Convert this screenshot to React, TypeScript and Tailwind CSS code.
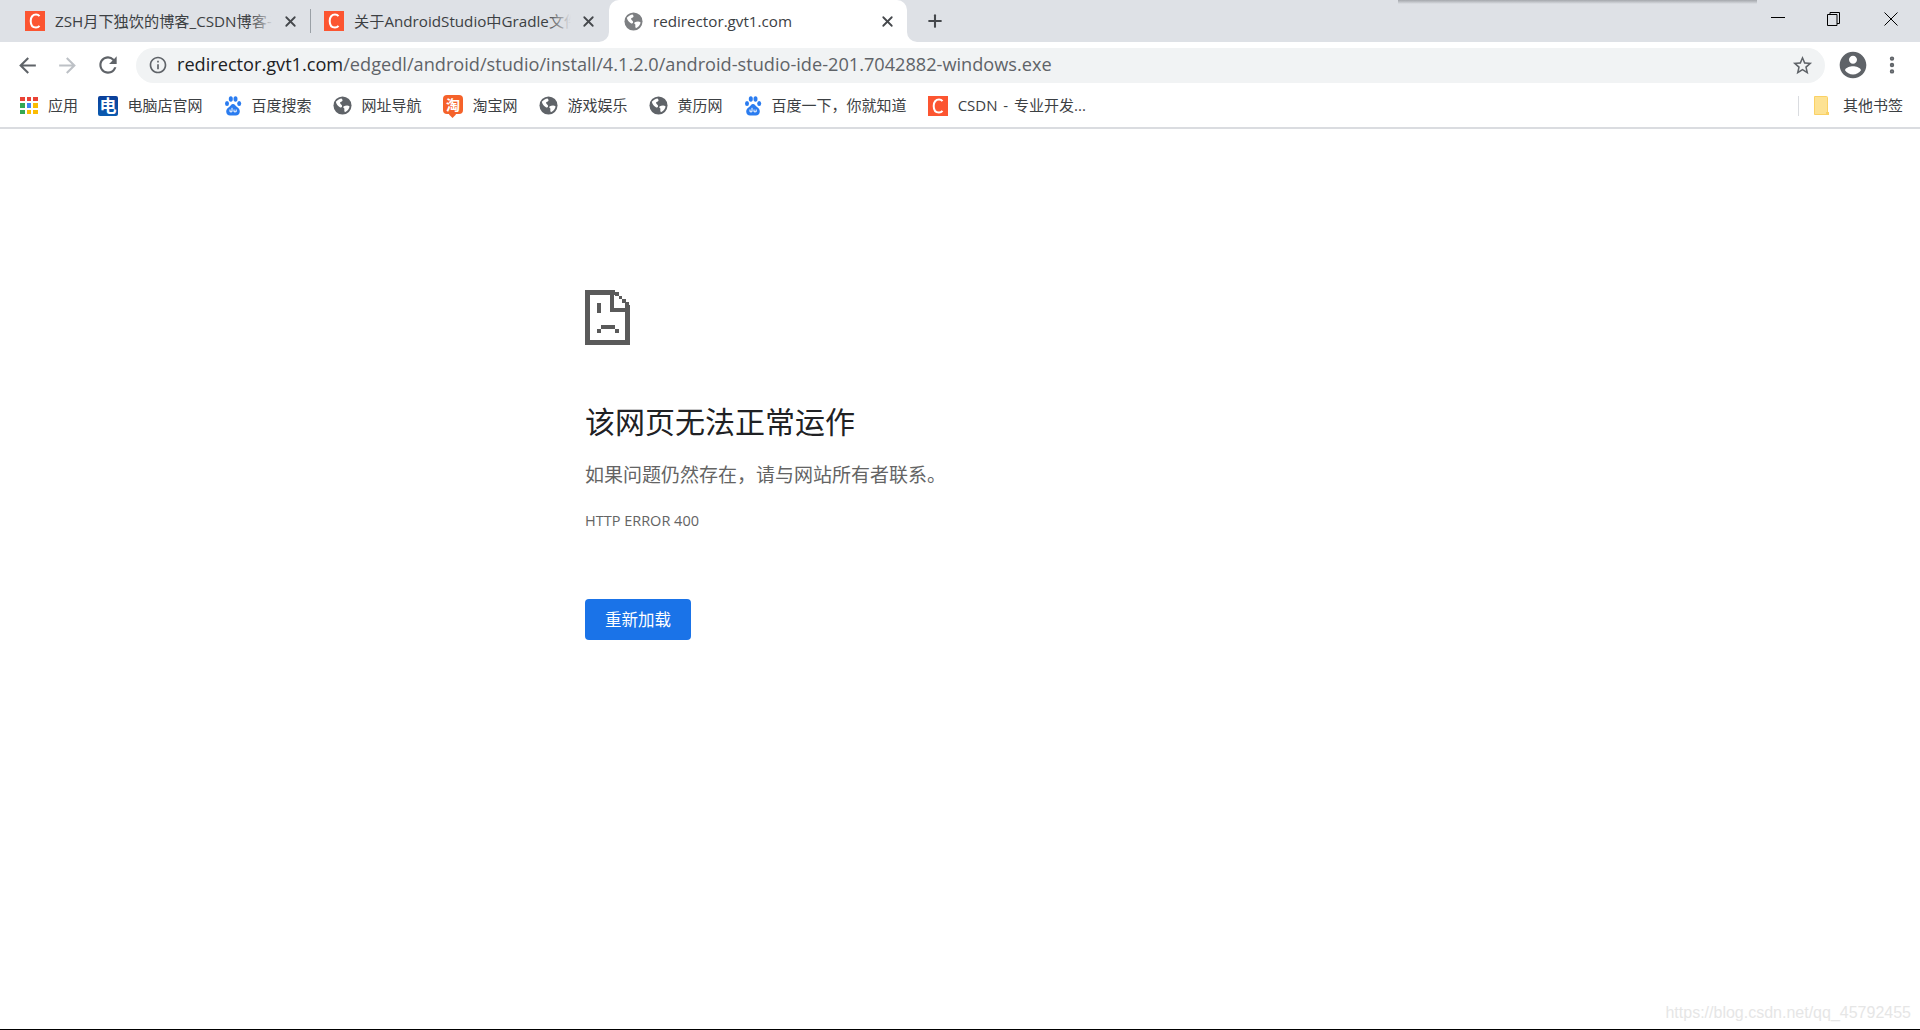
import React from 'react';
import { X, Plus, EllipsisVertical } from 'lucide-react';

const cjk = "font-['Open_Sans','Noto_Sans_CJK_SC',sans-serif]";

const MaterialIcon = ({ d, size, className }: { d: string; size: number; className?: string }) => (
  <svg width={size} height={size} viewBox="0 0 24 24" fill="currentColor" className={`shrink-0 ${className ?? ''}`}>
    <path d={d} />
  </svg>
);

const CsdnIcon = () => (
  <span className="w-5 h-5 bg-[#fc5531] flex items-center justify-center shrink-0">
    <svg width="12" height="16" viewBox="0 0 12 16" fill="none">
      <path d="M10.5 3.2C9.6 2 8.4 1.5 7 1.5 3.8 1.5 1.7 4 1.7 8s2.1 6.5 5.3 6.5c1.4 0 2.6-.5 3.5-1.7" stroke="#fff" strokeWidth="2" />
    </svg>
  </span>
);

const Globe = ({ color = '#5f6368' }: { color?: string }) => (
  <svg width="19" height="19" viewBox="0 0 20 20" className="shrink-0">
    <circle cx="10" cy="10" r="9.5" fill={color} />
    <path d="M3 6c2-2 4-3.500 6-3.500 1 1 1.500 2 .5 3S7 6 7.500 7.500 10 9 9.500 11 7 12 5.500 10.500 3.500 8 3 6zM11 11c2-1 5-1.500 6.500 0-.5 2.500-2.500 5-5 6-1-1.500-.5-2.500-.5-3.500S10 12 11 11z" fill="#fff" />
  </svg>
);

const Baidu = () => (
  <svg width="18" height="20" viewBox="0 0 18 20" className="shrink-0">
    <g fill="#2a7cf0">
      <ellipse cx="3" cy="7.500" rx="2" ry="2.500" />
      <ellipse cx="6.800" cy="3" rx="2" ry="2.800" />
      <ellipse cx="11.500" cy="3" rx="2" ry="2.800" />
      <ellipse cx="15.200" cy="7.500" rx="2" ry="2.500" />
      <path d="M9 8c2 0 2.500 2 4 3s2.800 2 2.800 4.500-2 4-4 4H6c-2 0-3.800-1.500-3.800-4s1.500-3.500 3-4.500S7 8 9 8z" />
    </g>
    <path d="M6 13.500v2.300h2v-4M10 13.500v2.300h2.200v-2.300" fill="none" stroke="#fff" strokeWidth="1" />
  </svg>
);

const Taobao = () => (
  <span className="w-5 h-[19px] rounded-[4px] bg-[#f5622a] text-white relative flex items-center justify-center text-[14px] font-bold leading-none shrink-0 -mt-[2px]">
    淘
    <span className="absolute left-[7px] -bottom-[3px] w-[5px] h-[5px] bg-[#f5622a] rotate-45" />
  </span>
);

const Apps = () => (
  <span className="grid grid-cols-3 gap-[2px] w-[18px] shrink-0">
    {['#ea4335', '#ea4335', '#ea4335', '#34a853', '#4285f4', '#fbbc04', '#34a853', '#fbbc04', '#fbbc04'].map((c, i) => (
      <span key={i} className="w-[4.600px] h-[4.600px]" style={{ background: c }} />
    ))}
  </span>
);

const Dian = () => (
  <span className="w-5 h-5 rounded-[2px] bg-gradient-to-b from-[#0b3f9a] to-[#0b5bb0] text-white flex items-center justify-center text-[17px] font-bold leading-none shrink-0">电</span>
);

const Folder = () => (
  <svg width="15" height="19" viewBox="0 0 15 19" className="shrink-0">
    <path d="M.5.5h12a1 1 0 0 1 1 1v17H.5z" fill="#fde293" stroke="#fad165" />
    <path d="M12 19v-3h3v3z" fill="#fad165" />
  </svg>
);

// pixel-art sad page
const SadPage = () => (
  <svg width="45" height="55" viewBox="0 0 45 55" shapeRendering="crispEdges" fill="#5a5a5a" className="block">
    <path d="M0 0h30v5H5v45h35V15h5v40H0z" />
    <path d="M25 5h4v13h11v4H25z" />
    <path d="M30 2h3.500v3.500H30zM33.500 5.500H37V9h-3.500zM37 9h3.500v3.500H37zM40 12h3.500v3.500H40z" />
    <path d="M12 13h4v10h-4zM16 35h14v3.500H16zM12 38.500h4V43h-4zM30 38.500h4V43h-4z" />
  </svg>
);

const bookmarks: { icon: React.ReactNode; label: string }[] = [
  { icon: <Dian />, label: '电脑店官网' },
  { icon: <Baidu />, label: '百度搜索' },
  { icon: <Globe />, label: '网址导航' },
  { icon: <Taobao />, label: '淘宝网' },
  { icon: <Globe />, label: '游戏娱乐' },
  { icon: <Globe />, label: '黄历网' },
  { icon: <Baidu />, label: '百度一下，你就知道' },
  { icon: <CsdnIcon />, label: 'CSDN - 专业开发...' },
];

export default function App() {
  return (
    <div className={`w-[1920px] h-[1030px] bg-white flex flex-col overflow-hidden ${cjk}`}>
      {/* Tab strip */}
      <div className="h-[42px] bg-[#dee1e6] flex items-stretch shrink-0 relative">
        <div className="absolute top-0 left-[1398px] w-[359px] h-[4px] bg-gradient-to-b from-[#a4a7ac] to-[#dee1e6]" />
        <div className="w-[310px] flex items-center pl-[25px] shrink-0">
          <CsdnIcon />
          <span className="ml-[10px] w-[219px] overflow-hidden whitespace-nowrap text-[15.200px] text-[#3c4043] relative">
            ZSH月下独饮的博客_CSDN博客-
            <span className="absolute right-0 top-0 bottom-0 w-6 bg-gradient-to-r from-transparent to-[#dee1e6]" />
          </span>
          <X size={17} strokeWidth={2.500} className="ml-[7.500px] text-[#45484c] shrink-0" />
        </div>
        <div className="w-[1px] h-[24px] bg-[#9aa0a6] self-center shrink-0" />
        <div className="w-[298px] flex items-center pl-[13px] shrink-0">
          <CsdnIcon />
          <span className="ml-[10px] w-[217px] overflow-hidden whitespace-nowrap text-[15.200px] text-[#3c4043] relative">
            关于AndroidStudio中Gradle文件
            <span className="absolute right-0 top-0 bottom-0 w-6 bg-gradient-to-r from-transparent to-[#dee1e6]" />
          </span>
          <X size={17} strokeWidth={2.500} className="ml-[9px] text-[#45484c] shrink-0" />
        </div>
        <div className="w-[298px] bg-white rounded-t-[10px] flex items-center pl-[15px] pr-[11.500px] shrink-0 relative">
          {/* flared bottom corners of the active tab */}
          <span className="absolute -left-[10px] bottom-0 w-[10px] h-[10px] bg-white">
            <span className="block w-full h-full bg-[#dee1e6] rounded-br-[10px]" />
          </span>
          <span className="absolute -right-[10px] bottom-0 w-[10px] h-[10px] bg-white">
            <span className="block w-full h-full bg-[#dee1e6] rounded-bl-[10px]" />
          </span>
          <Globe color="#7d7f82" />
          <span className="ml-[10px] whitespace-nowrap text-[15.200px] text-[#3c4043]">redirector.gvt1.com</span>
          <X size={17} strokeWidth={2.500} className="ml-auto text-[#45484c] shrink-0" />
        </div>
        <div className="ml-[17.500px] flex items-center">
          <Plus size={20} strokeWidth={2.500} className="text-[#45484c]" />
        </div>
        <div className="ml-auto flex items-start">
          <div className="w-[56px] flex justify-center pt-[17px]"><div className="w-[14px] h-[1px] bg-black" /></div>
          <div className="w-[56px] flex justify-center pt-[12px] pr-[2px]">
            <svg width="13" height="14" viewBox="0 0 13 14" fill="none" stroke="#000" strokeWidth="1">
              <path d="M.5 2.500h9.500v11H.5zM3 2.500V.5h9.500v11H10" />
            </svg>
          </div>
          <div className="w-[58px] flex justify-center pt-[12px] pr-[1px]">
            <svg width="14" height="14" viewBox="0 0 14 14" stroke="#000" strokeWidth="1"><path d="M.5.5l13 13M13.500.5l-13 13" /></svg>
          </div>
        </div>
      </div>

      {/* Toolbar */}
      <div className="h-[46px] flex items-center shrink-0 bg-white">
        <div className="w-[136px] flex items-center text-[#5f6368] shrink-0 pl-[15px]">
          <MaterialIcon size={25} d="M20 11H7.830l5.590-5.590L12 4l-8 8 8 8 1.410-1.410L7.830 13H20v-2z" />
          <MaterialIcon size={25} className="ml-[15px] text-[#bdc1c6]" d="M12 4l-1.410 1.410L16.170 11H4v2h12.170l-5.580 5.590L12 20l8-8z" />
          <MaterialIcon size={26} className="ml-[15px]" d="M17.650 6.350A7.958 7.958 0 0 0 12 4c-4.420 0-7.990 3.580-7.990 8s3.570 8 7.990 8c3.730 0 6.840-2.550 7.730-6h-2.080A5.990 5.990 0 0 1 12 18c-3.310 0-6-2.690-6-6s2.690-6 6-6c1.660 0 3.140.690 4.220 1.780L13 11h7V4l-2.350 2.350z" />
        </div>
        <div className="w-[1689px] h-[35px] bg-[#f1f3f4] rounded-full flex items-center pl-[11.500px] pr-[11.500px] shrink-0">
          <MaterialIcon size={20} className="text-[#5f6368]" d="M11 7h2v2h-2zm0 4h2v6h-2zm1-9C6.480 2 2 6.480 2 12s4.480 10 10 10 10-4.480 10-10S17.520 2 12 2zm0 18c-4.410 0-8-3.590-8-8s3.590-8 8-8 8 3.590 8 8-3.590 8-8 8z" />
          <span className="ml-[9.500px] text-[18.170px] whitespace-nowrap text-[#5f6368]">
            <span className="text-[#202124]">redirector.gvt1.com</span>/edgedl/android/studio/install/4.1.2.0/android-studio-ide-201.7042882-windows.exe
          </span>
          <MaterialIcon size={23} className="ml-auto text-[#5f6368]" d="M22 9.240l-7.190-.620L12 2 9.190 8.630 2 9.240l5.460 4.730L5.820 21 12 17.270 18.180 21l-1.630-7.030L22 9.240zM12 15.400l-3.760 2.270 1-4.280-3.320-2.880 4.380-.380L12 6.100l1.710 4.040 4.380.380-3.320 2.880 1 4.280L12 15.400z" />
        </div>
        <div className="flex items-center ml-[11.500px]">
          <MaterialIcon size={32} className="text-[#5f6368]" d="M12 2C6.480 2 2 6.480 2 12s4.480 10 10 10 10-4.480 10-10S17.520 2 12 2zm0 3c1.660 0 3 1.340 3 3s-1.340 3-3 3-3-1.340-3-3 1.340-3 3-3zm0 14.200c-2.500 0-4.710-1.280-6-3.220.030-1.990 4-3.080 6-3.080 1.990 0 5.970 1.090 6 3.080-1.290 1.940-3.500 3.220-6 3.220z" />
          <EllipsisVertical size={22} strokeWidth={2.800} className="ml-[12.500px] text-[#5f6368]" />
        </div>
      </div>

      {/* Bookmarks bar */}
      <div className="h-[35px] pb-[4px] box-content flex items-center border-b-2 border-[#dadce0] shrink-0 pl-[20px] text-[15px] text-[#3c4043]">
        <div className="flex items-center gap-[10px] whitespace-nowrap">
          <Apps />
          <span>应用</span>
        </div>
        <div className="ml-[20px] flex items-center gap-[21.500px]">
          {bookmarks.map((b) => (
            <div key={b.label} className="flex items-center gap-[9.500px] whitespace-nowrap [word-spacing:2px]">
              {b.icon}
              <span>{b.label}</span>
            </div>
          ))}
        </div>
        <div className="ml-auto flex items-center pr-[17px]">
          <div className="w-[1px] h-[20px] bg-[#dadce0] mr-[15px]" />
          <Folder />
          <span className="ml-[14px] whitespace-nowrap">其他书签</span>
        </div>
      </div>

      {/* Error page */}
      <div className="flex-1 relative pl-[585px] pt-[161px] border-b border-black">
        <SadPage />
        <h1 className="mt-[57px] text-[30px] leading-[40px] text-[#202124] font-normal">该网页无法正常运作</h1>
        <p className="mt-[20px] text-[19px] leading-[26px] text-[#646464]">如果问题仍然存在，请与网站所有者联系。</p>
        <p className="mt-[23px] text-[14.500px] leading-[20px] text-[#646464]">HTTP ERROR 400</p>
        <button className="block mt-[68px] w-[106px] h-[41px] pt-[1px] bg-[#1a73e8] rounded-[4px] text-white text-[16.500px]">重新加载</button>
        <span className="absolute right-[9px] bottom-[4px] text-[16px] text-[#e6e6e6] font-['Liberation_Sans',sans-serif]">https://blog.csdn.net/qq_45792455</span>
      </div>
    </div>
  );
}
